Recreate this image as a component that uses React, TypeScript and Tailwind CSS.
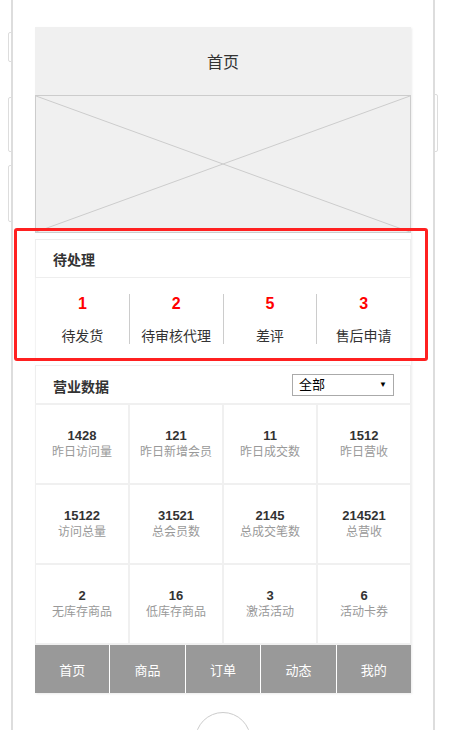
import React from "react";

const todo = [
  { n: "1", label: "待发货" },
  { n: "2", label: "待审核代理" },
  { n: "5", label: "差评" },
  { n: "3", label: "售后申请" },
];

const stats = [
  { n: "1428", label: "昨日访问量" },
  { n: "121", label: "昨日新增会员" },
  { n: "11", label: "昨日成交数" },
  { n: "1512", label: "昨日营收" },
  { n: "15122", label: "访问总量" },
  { n: "31521", label: "总会员数" },
  { n: "2145", label: "总成交笔数" },
  { n: "214521", label: "总营收" },
  { n: "2", label: "无库存商品" },
  { n: "16", label: "低库存商品" },
  { n: "3", label: "激活活动" },
  { n: "6", label: "活动卡券" },
];

const tabs = ["首页", "商品", "订单", "动态", "我的"];

export default function App() {
  return (
    <div className="relative w-[464px] h-[730px] overflow-hidden bg-white font-['Liberation_Sans','Noto_Sans_CJK_SC',sans-serif] text-[#333]">
      {/* side buttons of the phone */}
      <div className="absolute left-[8px] top-[32px] w-[4px] h-[30px] border border-[#ddd] rounded-l-[2px]" />
      <div className="absolute left-[8px] top-[97px] w-[4px] h-[55px] border border-[#ddd] rounded-l-[2px]" />
      <div className="absolute left-[8px] top-[165px] w-[4px] h-[57px] border border-[#ddd] rounded-l-[2px]" />
      <div className="absolute left-[434px] top-[94px] w-[4px] h-[58px] border border-[#ddd] rounded-r-[2px]" />

      {/* phone frame */}
      <div className="ml-[11px] w-[424px] h-[760px] border-x-2 border-[#ddd]">
        <div className="ml-[22px] w-[376px] pt-[27px]">
          <div className="shadow-[1px_1px_2px_rgba(0,0,0,0.08)]">
            {/* title bar */}
            <div className="h-[68px] bg-[#f0f0f0] flex items-center justify-center pt-[3px] text-[16px] leading-[20px] text-[#333]">
              首页
            </div>

            {/* image placeholder */}
            <div className="h-[138px] bg-[#f0f0f0] border border-[#ccc]">
              <svg width="100%" height="100%" viewBox="0 0 374 136" preserveAspectRatio="none">
                <line x1="0" y1="0" x2="374" y2="136" stroke="#ccc" strokeWidth="1" />
                <line x1="374" y1="0" x2="0" y2="136" stroke="#ccc" strokeWidth="1" />
              </svg>
            </div>

            <div className="h-[6px] bg-white" />

            {/* pending */}
            <div className="h-[39px] border border-[#eee] flex items-center pl-[17px] pt-[2px] text-[14px] font-bold leading-[18px]">
              待处理
            </div>
            <div className="flex pt-[16px] pb-[16px] border-x border-[#f3f3f3] bg-white">
              {todo.map((t, i) => (
                <div
                  key={t.label}
                  className={`flex-1 h-[50px] flex flex-col items-center ${i > 0 ? "border-l border-[#ccc]" : ""}`}
                >
                  <span className="text-[16px] leading-[20px] font-bold text-[#ff0000]">{t.n}</span>
                  <span className="mt-auto text-[14px] leading-[16px] text-[#333]">{t.label}</span>
                </div>
              ))}
            </div>

            <div className="h-[5px] bg-white" />

            {/* business data */}
            <div className="h-[38px] border border-[#eee] border-b-0 flex items-center justify-between pl-[17px] pr-[16px]">
              <span className="pt-[4px] text-[14px] font-bold leading-[18px]">营业数据</span>
              <div className="w-[102px] h-[22px] border border-[#aaa] flex items-center justify-between pl-[6px] pr-[6px] text-[13px] leading-[16px] text-[#000]">
                <span>全部</span>
                <span className="text-[8px] leading-none">▼</span>
              </div>
            </div>
            <div className="grid grid-cols-4 gap-[2px] bg-[#f0f0f0] px-[1px] py-[2px]">
              {stats.map((s) => (
                <div key={s.label} className="h-[78px] bg-white flex flex-col items-center justify-center">
                  <span className="text-[13px] leading-[16px] font-bold text-[#333]">{s.n}</span>
                  <span className="text-[12px] leading-[17px] text-[#999]">{s.label}</span>
                </div>
              ))}
            </div>

            {/* tab bar */}
            <div className="flex gap-px bg-white">
              {tabs.map((t) => (
                <div key={t} className="flex-1 h-[48px] bg-[#999] flex items-center justify-center pt-[3px] text-[13px] leading-[16px] text-white">
                  {t}
                </div>
              ))}
            </div>
          </div>

          {/* home button */}
          <div className="mx-auto mt-[19px] w-[56px] h-[56px] rounded-full border-[1.5px] border-[#ccc]" />
        </div>
      </div>

      {/* highlight annotation */}
      <div className="absolute left-[14px] top-[228px] w-[414px] h-[133px] border-[3px] border-[#ff2020] rounded-[3px]" />
    </div>
  );
}
